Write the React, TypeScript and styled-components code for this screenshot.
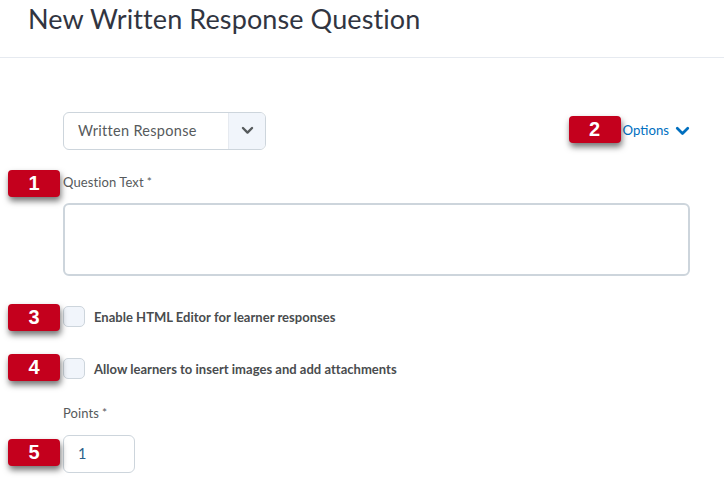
import React from 'react';

import styled, {createGlobalStyle} from 'styled-components';

const GlobalStyle = createGlobalStyle`
    html,
    body {
        margin: 0;
        padding: 0;
        background: #ffffff;
        font-family: Lato, "Open Sans", sans-serif;
    }
`;

function Chevron({size, color}: {size: number; color: string}) {
    return (
        <svg width={size} height={size * 0.7} viewBox="0 0 14 10" fill="none">
            <path d="M2 2.2 L7 7.2 L12 2.2" stroke={color} strokeWidth="2.6" strokeLinecap="round" strokeLinejoin="round" />
        </svg>
    );
}

export default function App() {
    return (
        <>
            <GlobalStyle />
            <StyledPage>
                <StyledHeader>
                    <StyledTitle>New Written Response Question</StyledTitle>
                </StyledHeader>
                <StyledForm>
                    <StyledTopRow>
                        <StyledSelect>
                            <StyledSelectValue>Written Response</StyledSelectValue>
                            <StyledSelectArrow>
                                <Chevron size={13} color="#565a5c" />
                            </StyledSelectArrow>
                        </StyledSelect>
                        <StyledOptions>
                            <StyledBadge $top={-6} $left={-54}>2</StyledBadge>
                            Options
                            <StyledOptionsIcon>
                                <Chevron size={15} color="#006fbf" />
                            </StyledOptionsIcon>
                        </StyledOptions>
                    </StyledTopRow>
                    <StyledLabelRow $marginTop={23}>
                        <StyledBadge $top={-3} $left={-55}>1</StyledBadge>
                        <StyledLabel>Question Text<StyledStar>*</StyledStar></StyledLabel>
                    </StyledLabelRow>
                    <StyledTextArea />
                    <StyledCheckRow $marginTop={30}>
                        <StyledBadge $top={-2} $left={-55}>3</StyledBadge>
                        <StyledCheckbox />
                        <StyledCheckLabel>Enable HTML Editor for learner responses</StyledCheckLabel>
                    </StyledCheckRow>
                    <StyledCheckRow $marginTop={31}>
                        <StyledBadge $top={-4} $left={-55}>4</StyledBadge>
                        <StyledCheckbox />
                        <StyledCheckLabel>Allow learners to insert images and add attachments</StyledCheckLabel>
                    </StyledCheckRow>
                    <StyledLabelRow $marginTop={25}>
                        <StyledLabel>Points<StyledStar>*</StyledStar></StyledLabel>
                    </StyledLabelRow>
                    <StyledPointsRow>
                        <StyledBadge $top={4} $left={-55}>5</StyledBadge>
                        <StyledPoints>1</StyledPoints>
                    </StyledPointsRow>
                </StyledForm>
            </StyledPage>
        </>
    );
}

const StyledPage = styled.div`
    width: 724px;
    height: 495px;
    overflow: hidden;
    background: #ffffff;
`;

const StyledHeader = styled.header`
    height: 57px;
    padding-left: 28px;
    border-bottom: 1px solid #e6eaf0;
`;

const StyledTitle = styled.h1`
    margin: 0;
    font-size: 27px;
    font-weight: 400;
    line-height: 38px;
    letter-spacing: 0.1px;
    color: #313541;
`;

const StyledForm = styled.main`
    display: flex;
    flex-direction: column;
    padding: 54px 34px 0 63px;
`;

const StyledTopRow = styled.div`
    display: flex;
    align-items: center;
    justify-content: space-between;
`;

const StyledSelect = styled.div`
    display: flex;
    width: 203px;
    height: 38px;
    box-sizing: border-box;
    border: 1px solid #cdd5dc;
    border-radius: 6px;
    overflow: hidden;
`;

const StyledSelectValue = styled.div`
    flex: 1;
    padding-left: 14px;
    font-size: 14.5px;
    line-height: 35px;
    letter-spacing: 0.3px;
    color: #565a5c;
`;

const StyledSelectArrow = styled.div`
    display: flex;
    align-items: center;
    justify-content: center;
    width: 36px;
    border-left: 1px solid #e6eaf0;
    background: #f1f5fb;
`;

const StyledOptions = styled.div`
    position: relative;
    display: flex;
    align-items: center;
    gap: 6px;
    margin-top: -2px;
    font-size: 13.2px;
    color: #006fbf;
`;

const StyledOptionsIcon = styled.span`
    display: flex;
    margin-top: 3px;
`;

const StyledBadge = styled.div<{$top: number; $left: number}>`
    position: absolute;
    top: ${(props) => props.$top}px;
    left: ${(props) => props.$left}px;
    width: 52px;
    height: 27px;
    border-radius: 4px;
    background: #c4001d;
    box-shadow: 1px 4px 6px rgba(0, 0, 0, 0.55);
    font-family: "Liberation Sans", sans-serif;
    font-size: 20px;
    font-weight: 700;
    line-height: 27px;
    text-align: center;
    color: #ffffff;
`;

const StyledLabelRow = styled.div<{$marginTop: number}>`
    position: relative;
    margin-top: ${(props) => props.$marginTop}px;
    height: 18px;
`;

const StyledLabel = styled.label`
    display: block;
    font-size: 13px;
    line-height: 18px;
    letter-spacing: 0.1px;
    color: #565a5c;
`;

const StyledStar = styled.span`
    margin-left: 3px;
    font-size: 12px;
    vertical-align: 1px;
`;

const StyledTextArea = styled.div`
    width: 627px;
    height: 73px;
    margin-top: 12px;
    box-sizing: border-box;
    border: 2px solid #cdd5dc;
    border-radius: 6px;
`;

const StyledCheckRow = styled.div<{$marginTop: number}>`
    position: relative;
    display: flex;
    align-items: center;
    gap: 9px;
    height: 21px;
    margin-top: ${(props) => props.$marginTop}px;
`;

const StyledCheckbox = styled.div`
    width: 22px;
    height: 21px;
    box-sizing: border-box;
    border: 1px solid #cdd5dc;
    border-radius: 5px;
    background: #f1f5fb;
`;

const StyledCheckLabel = styled.span`
    font-size: 13px;
    font-weight: 700;
    letter-spacing: 0.02px;
    color: #494c4e;
`;

const StyledPointsRow = styled.div`
    position: relative;
    margin-top: 13px;
`;

const StyledPoints = styled.div`
    width: 72px;
    height: 38px;
    box-sizing: border-box;
    padding-left: 14px;
    border: 1px solid #cdd5dc;
    border-radius: 6px;
    font-size: 14.5px;
    line-height: 36px;
    color: #2b5f8a;
`;
